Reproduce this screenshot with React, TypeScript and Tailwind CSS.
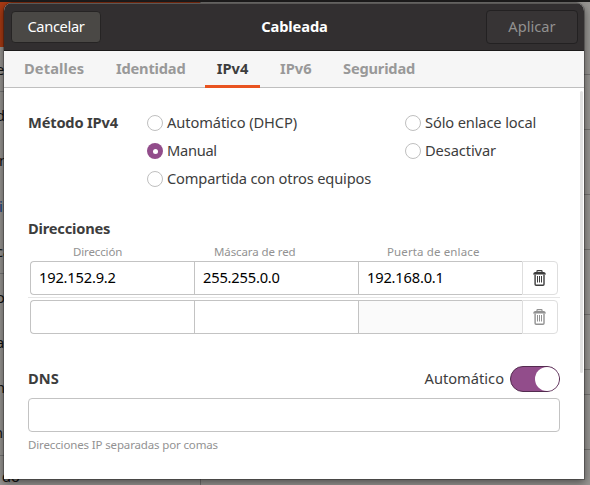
import React from "react";

const sidebar = [
  { text: "et", color: "text-[#111]", offset: "-ml-1" },
  { text: "d", color: "text-[#111]", offset: "-ml-1" },
  { text: "n", color: "text-[#111]", offset: "-ml-px" },
  { text: "ir", color: "text-[#123a7a]", offset: "-ml-px" },
  { text: "ca", color: "text-[#111]", offset: "-ml-1" },
  { text: "o", color: "text-[#111]", offset: "-ml-1" },
  { text: "a", color: "text-[#111]", offset: "-ml-1" },
  { text: "n", color: "text-[#111]", offset: "-ml-1" },
  { text: "n", color: "text-[#111]", offset: "-ml-1.5" },
];

const panelRows = ["h-[73px]", "h-[55px]", "h-[65px]", "h-[55px]", "h-[65px]", "h-[55px]", "h-[25px]", "h-[55px]"];

function Backdrop() {
  return (
    <div className="flex h-full w-full flex-col bg-[#989693]">
      <div className="h-[2px] shrink-0 bg-[#1d1c1c]" />
      <div className="flex min-h-0 flex-1">
        <div className="flex w-[201px] shrink-0 flex-col border-r border-[#737170]">
          <div className="h-[45px] shrink-0 bg-[#a83a13]" />
          {sidebar.map((s, i) => (
            <div
              key={i}
              className={`flex h-[45.4px] shrink-0 items-center text-[14.67px] ${s.color} ${i % 4 === 0 ? "border-b border-[#777]" : ""}`}
            >
              <span className={s.offset}>{s.text}</span>
            </div>
          ))}
          <div className="pl-[2px] pt-[10px] text-[14.67px] text-[#111]">do</div>
        </div>
        <div className="flex-1">
          {panelRows.map((height, i) => (
            <div key={i} className={`${height} border-b border-[#757371]`} />
          ))}
        </div>
      </div>
    </div>
  );
}

function Radio({ label, checked = false, tracking }: { label: string; checked?: boolean; tracking: string }) {
  return (
    <label className="flex h-7 items-center gap-1 whitespace-nowrap">
      {checked ? (
        <span className="flex size-4 items-center justify-center rounded-full bg-[#924d8b]">
          <span className="size-[5px] rounded-full bg-white" />
        </span>
      ) : (
        <span className="size-4 rounded-full border border-[#bfbfbf] bg-white" />
      )}
      <span className={`pb-0.5 ${tracking}`}>{label}</span>
    </label>
  );
}

function Trash() {
  return (
    <svg width="13" height="16" viewBox="0 0 13 16" fill="none" stroke="currentColor">
      <path d="M4 2.2V1.2Q4 .6 4.6 .6H8.4Q9 .6 9 1.2V2.2" strokeWidth="1.2" />
      <path d="M2 2H11Q12.6 2.3 13 4.6H0Q.4 2.3 2 2Z" fill="currentColor" stroke="none" />
      <path d="M2.1 4.6V14.3Q2.1 15.3 3.1 15.3H10Q11 15.3 11 14.3V4.6" strokeWidth="1.4" />
      <path d="M4.5 6V12.5M6.5 6V12.5M8.5 6V12.5" />
    </svg>
  );
}

function AddressRow({ values, empty = false }: { values: string[]; empty?: boolean }) {
  return (
    <div className="ml-[2px] flex h-[34px] w-[528px] tracking-[-0.19px] text-black">
      <div className="flex w-[164px] items-center rounded-l-[4px] border-y border-l border-[#c3c3c3] pb-0.5 pl-2">{values[0]}</div>
      <div className="flex w-[164px] items-center border-y border-l border-[#c3c3c3] pb-0.5 pl-2">{values[1]}</div>
      <div className={`flex w-[164px] items-center border-y border-l border-[#c3c3c3] pb-0.5 pl-2 ${empty ? "bg-[#fafafa]" : ""}`}>{values[2]}</div>
      <div className={`flex w-9 items-center rounded-r-[4px] border border-[#dedede] pl-[10px] ${empty ? "text-[#929292]" : "text-[#3d3d3d]"}`}>
        <Trash />
      </div>
    </div>
  );
}

export default function App() {
  return (
    <div className="relative h-[485px] w-[590px] overflow-hidden font-['Noto_Sans','Liberation_Sans',sans-serif] text-[14.67px] leading-5 text-[#3d3d3d]">
      <Backdrop />
      <div className="absolute left-[4px] top-[3px] flex h-[476px] w-[580px] flex-col overflow-hidden rounded-t-[8px] bg-white shadow-[0_3px_9px_1px_rgba(0,0,0,0.45),0_0_0_1px_rgba(0,0,0,0.25)]">
        <header className="flex h-[48px] shrink-0 items-center justify-between border-b border-t border-b-[#1b1a1a] border-t-[#5a5856] bg-[#322f30] pl-[7px] pr-[6px]">
          <button className="h-8 w-[90px] rounded-[4px] border border-[#262424] bg-[#4a4845] pb-0.5 tracking-[-0.35px] text-white">Cancelar</button>
          <span className="pb-0.5 pl-[2px] font-bold tracking-[-0.12px] text-white">Cableada</span>
          <button className="h-[34px] w-[92px] rounded-[4px] border border-[#232122] bg-[#373435] pb-0.5 text-[#929190]">Aplicar</button>
        </header>
        <nav className="flex h-[37px] shrink-0 items-center border-b border-[#bfbfbf] bg-[#f6f6f6] font-bold text-[#999]">
          <span className="ml-5 w-[92px] pb-0.5 tracking-[0.1px]">Detalles</span>
          <span className="w-[89px] pb-0.5 tracking-[-0.2px]">Identidad</span>
          <span className="mt-px flex h-[37px] w-[55px] items-center justify-center border-b-[3px] border-[#e95420] text-[#3d3d3d]">IPv4</span>
          <span className="ml-5 w-[63px] pb-0.5">IPv6</span>
          <span className="pb-0.5 tracking-[-0.2px]">Seguridad</span>
        </nav>
        <main className="flex min-h-0 flex-1">
          <div className="w-[576px] shrink-0 pl-6 pt-[21px]">
            <div className="flex">
              <div className="h-7 w-[119px] font-bold leading-[26px] tracking-[-0.18px]">Método IPv4</div>
              <div className="w-[258px]">
                <Radio label="Automático (DHCP)" tracking="tracking-[-0.1px]" />
                <Radio label="Manual" checked tracking="tracking-[-0.3px]" />
                <Radio label="Compartida con otros equipos" tracking="tracking-[-0.16px]" />
              </div>
              <div>
                <Radio label="Sólo enlace local" tracking="tracking-[-0.14px]" />
                <Radio label="Desactivar" tracking="tracking-[-0.1px]" />
              </div>
            </div>
            <div className="mt-[25px] h-5 font-bold tracking-[-0.2px]">Direcciones</div>
            <div className="mt-[6px] flex h-4 text-[11.5px] leading-4 text-[#929292]">
              <span className="w-[141px] pl-[45px] tracking-[-0.14px]">Dirección</span>
              <span className="w-[218px] pl-[45px] tracking-[-0.1px]">Máscara de red</span>
              <span className="tracking-[0.13px]">Puerta de enlace</span>
            </div>
            <div className="h-px" />
            <AddressRow values={["192.152.9.2", "255.255.0.0", "192.168.0.1"]} />
            <div className="my-[2px] h-px w-[532px] bg-[#e6e6e6]" />
            <AddressRow values={["", "", ""]} empty />
            <div className="mt-8 flex h-[26px] w-[532px] items-center">
              <span className="flex-1 pb-0.5 font-bold">DNS</span>
              <span className="mr-[6px] pb-0.5">Automático</span>
              <span className="flex h-[26px] w-[50px] justify-end rounded-full border border-[#532b4f] bg-[#924d8b]">
                <span className="size-6 rounded-full bg-white" />
              </span>
            </div>
            <div className="mt-[6px] h-[34px] w-[532px] rounded-[4px] border border-[#c3c3c3]" />
            <div className="mt-[5px] text-[11.5px] leading-4 tracking-[-0.14px] text-[#929292]">Direcciones IP separadas por comas</div>
          </div>
          <div className="mt-[3px] h-[282px] w-[3px] rounded-full bg-[#e2e2e2]" />
        </main>
      </div>
    </div>
  );
}
